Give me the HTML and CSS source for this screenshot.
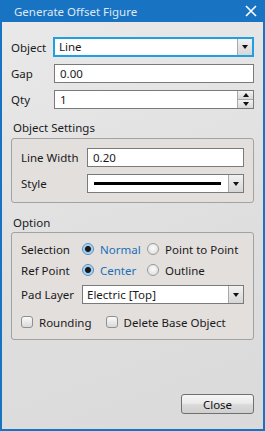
FILE: index.html
```html
<!DOCTYPE html>
<html lang="en">
<head>
    <meta charset="UTF-8">
    <title>Generate Offset Figure</title>
    <link rel="stylesheet" href="styles.css">
</head>
<body>
    <div class="win">
        <div class="title">
            <span class="title-text">Generate Offset Figure</span>
            <span class="close-x">
                <svg width="12" height="12" viewBox="0 0 12 12"><path d="M1 1L11 11M11 1L1 11" stroke="#fff" stroke-width="1.6"/></svg>
            </span>
        </div>
        <div class="content">
            <div class="row row-object">
                <span class="lbl lbl-top">Object</span>
                <div class="combo combo-focus">
                    <span class="combo-text">Line</span>
                    <span class="drop"><i class="tri"></i></span>
                </div>
            </div>
            <div class="row row-gap">
                <span class="lbl lbl-top">Gap</span>
                <div class="field">0.00</div>
            </div>
            <div class="row row-qty">
                <span class="lbl lbl-top">Qty</span>
                <div class="field spin">
                    <span class="spin-text">1</span>
                    <span class="spin-btns">
                        <span class="spin-btn"><i class="tri up"></i></span>
                        <span class="spin-btn"><i class="tri"></i></span>
                    </span>
                </div>
            </div>

            <div class="group-title">Object Settings</div>
            <div class="group group-obj">
                <div class="row">
                    <span class="lbl lbl-obj">Line Width</span>
                    <div class="field">0.20</div>
                </div>
                <div class="row row-style">
                    <span class="lbl lbl-obj">Style</span>
                    <div class="combo">
                        <span class="combo-text"><span class="line-sample"></span></span>
                        <span class="drop"><i class="tri"></i></span>
                    </div>
                </div>
            </div>

            <div class="group-title title-option">Option</div>
            <div class="group group-opt">
                <div class="row radio-row">
                    <span class="lbl lbl-opt">Selection</span>
                    <span class="radio on"></span><span class="rtext on-text">Normal</span>
                    <span class="radio"></span><span class="rtext">Point to Point</span>
                </div>
                <div class="row radio-row">
                    <span class="lbl lbl-opt">Ref Point</span>
                    <span class="radio on"></span><span class="rtext on-text">Center</span>
                    <span class="radio"></span><span class="rtext">Outline</span>
                </div>
                <div class="row row-pad">
                    <span class="lbl lbl-opt">Pad Layer</span>
                    <div class="combo">
                        <span class="combo-text">Electric [Top]</span>
                        <span class="drop"><i class="tri"></i></span>
                    </div>
                </div>
                <div class="row check-row">
                    <span class="check"></span><span class="ctext">Rounding</span>
                    <span class="check check-2"></span><span class="ctext">Delete Base Object</span>
                </div>
            </div>

            <div class="footer">
                <button class="btn">Close</button>
            </div>
        </div>
    </div>
</body>
</html>
```
FILE: styles.css
```css
*{
    padding: 0;
    margin: 0;
    box-sizing: border-box;
}
body{
    width: 265px;
    height: 431px;
    overflow: hidden;
    font-family: "Noto Sans", "DejaVu Sans", sans-serif;
    font-size: 11.5px;
    color: #1a1a1a;
}
.win{
    width: 265px;
    height: 431px;
    background: #1873c3;
    padding: 0 2px 2px 2px;
    display: flex;
    flex-direction: column;
}
.title{
    height: 22px;
    flex: none;
    display: flex;
    align-items: center;
    justify-content: space-between;
    color: #dde9f6;
    font-size: 11.5px;
    padding: 0 6px 0 12px;
}
.close-x{
    display: flex;
    align-items: center;
    margin-top: -1px;
}
.content{
    flex: 1;
    background: linear-gradient(160deg, #e9e9e9 0%, #dedede 60%, #dadada 100%);
    padding: 15px 9px 0 9px;
    display: flex;
    flex-direction: column;
}
.row{
    display: flex;
    align-items: center;
    flex: none;
}
.lbl-top{
    width: 43px;
}
.row-gap{
    margin-top: 7px;
}
.row-qty{
    margin-top: 7px;
}
.field{
    flex: 1;
    height: 19px;
    border: 1px solid #7a7a7a;
    background: #fff;
    padding: 0 5px;
    line-height: 17px;
}
.combo{
    flex: 1;
    height: 19px;
    border: 1px solid #7a7a7a;
    background: #fff;
    display: flex;
}
.combo-focus{
    height: 20px;
    border: 2px solid #1fa0e0;
    margin-left: -1px;
}
.combo-text{
    flex: 1;
    padding: 0 4px;
    line-height: 17px;
    display: flex;
    align-items: center;
}
.combo-focus .combo-text{
    line-height: 16px;
}
.drop{
    width: 15px;
    border-left: 1px solid #a9a9a9;
    background: linear-gradient(#f2f2f2, #d6d6d6);
    display: flex;
    align-items: center;
    justify-content: center;
}
.tri{
    width: 0;
    height: 0;
    border-left: 3.5px solid transparent;
    border-right: 3.5px solid transparent;
    border-top: 4px solid #111;
}
.tri.up{
    border-top: 0;
    border-bottom: 4px solid #111;
}
.spin{
    display: flex;
    padding: 0 0 0 5px;
}
.spin-text{
    flex: 1;
}
.spin-btns{
    width: 16px;
    display: flex;
    flex-direction: column;
    border-left: 1px solid #a9a9a9;
}
.spin-btn{
    flex: 1;
    display: flex;
    align-items: center;
    justify-content: center;
    background: linear-gradient(#f4f4f4, #d8d8d8);
}
.spin-btn + .spin-btn{
    border-top: 1px solid #a9a9a9;
}
.group-title{
    flex: none;
    margin-top: 10px;
    padding-left: 2px;
    height: 17px;
    line-height: 17px;
}
.title-option{
    margin-top: 11px;
}
.group{
    flex: none;
    margin-top: 2px;
    border: 1px solid #a2a2a2;
    border-radius: 3px;
    background: #e3dfdd;
    padding: 9px 9px 0 9px;
}
.group-obj{
    height: 65px;
}
.group-opt{
    margin-top: 1px;
    height: 108px;
    padding-top: 6px;
}
.lbl-obj{
    width: 66px;
}
.row-style{
    margin-top: 7px;
}
.line-sample{
    display: block;
    flex: 1;
    height: 3px;
    background: #000;
    margin: 0 3px 0 2px;
}
.lbl-opt{
    width: 61px;
}
.radio-row{
    height: 20px;
}
.radio-row + .radio-row{
    margin-top: 1px;
}
.radio{
    width: 12px;
    height: 12px;
    flex: none;
    border-radius: 50%;
    border: 1px solid #9a9a9a;
    background: radial-gradient(circle at 50% 40%, #fbfbfb, #d9d9d9);
}
.radio.on{
    border-color: #4d8fc7;
    background: radial-gradient(circle, #1a1a1a 0, #1a1a1a 2.5px, #9cc6e8 3.5px, #d7e9f8 6px);
}
.rtext{
    margin-left: 6px;
}
.on-text{
    color: #1a6fb8;
    width: 47px;
}
.row-pad{
    margin-top: 5px;
}
.check-row{
    margin-top: 11px;
    height: 14px;
}
.check{
    width: 12px;
    height: 12px;
    flex: none;
    border: 1px solid #8f8f8f;
    border-radius: 3px;
    background: linear-gradient(#fafafa, #d9d9d9);
}
.check-2{
    margin-left: 14px;
}
.ctext{
    margin-left: 6px;
}
.footer{
    margin-top: auto;
    display: flex;
    justify-content: flex-end;
    padding-bottom: 15px;
}
.btn{
    width: 73px;
    height: 20px;
    border: 1px solid #707070;
    border-radius: 3px;
    background: linear-gradient(#f6f6f6 0%, #ebebeb 45%, #d9d9d9 55%, #cfcfcf 100%);
    font-family: "Noto Sans", "DejaVu Sans", sans-serif;
    font-size: 11.5px;
    color: #111;
}
```
